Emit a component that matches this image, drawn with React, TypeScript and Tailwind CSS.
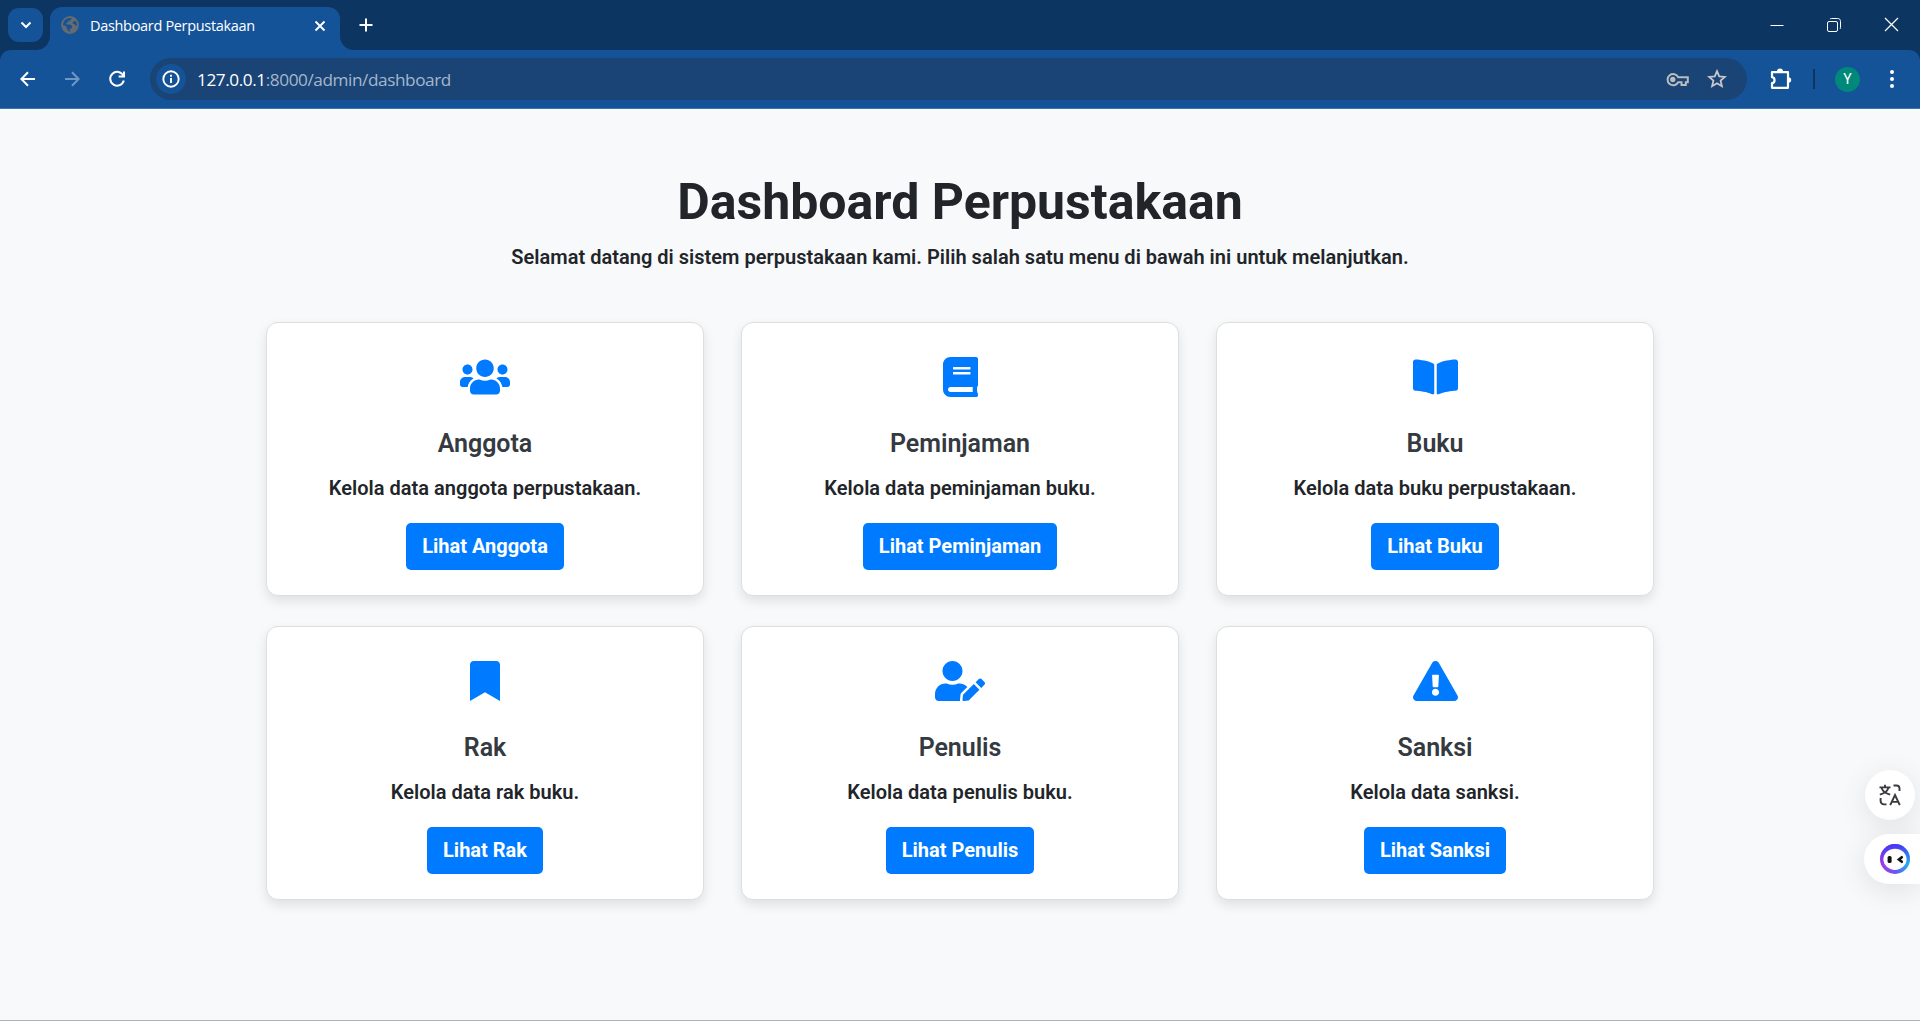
import type { ComponentType, ReactNode } from "react";
import {
  FaBook,
  FaBookmark,
  FaBookOpen,
  FaExclamationTriangle,
  FaUserEdit,
  FaUsers,
} from "react-icons/fa";

type Menu = {
  title: string;
  text: string;
  action: string;
  icon: ComponentType<{ className?: string }>;
  iconClass: string;
};

const menus: Menu[] = [
  { title: "Anggota", text: "Kelola data anggota perpustakaan.", action: "Lihat Anggota", icon: FaUsers, iconClass: "w-[50px]" },
  { title: "Peminjaman", text: "Kelola data peminjaman buku.", action: "Lihat Peminjaman", icon: FaBook, iconClass: "w-[35px]" },
  { title: "Buku", text: "Kelola data buku perpustakaan.", action: "Lihat Buku", icon: FaBookOpen, iconClass: "w-[45px]" },
  { title: "Rak", text: "Kelola data rak buku.", action: "Lihat Rak", icon: FaBookmark, iconClass: "w-[30px]" },
  { title: "Penulis", text: "Kelola data penulis buku.", action: "Lihat Penulis", icon: FaUserEdit, iconClass: "w-[50px]" },
  { title: "Sanksi", text: "Kelola data sanksi.", action: "Lihat Sanksi", icon: FaExclamationTriangle, iconClass: "w-[45px]" },
];

function Stroke({ size, width = 2, className = "", children }: { size: number; width?: number; className?: string; children: ReactNode }) {
  return (
    <svg
      width={size}
      height={size}
      viewBox={`0 0 ${size} ${size}`}
      fill="none"
      stroke="currentColor"
      strokeWidth={width}
      className={`block shrink-0 ${className}`}
    >
      {children}
    </svg>
  );
}

function TabStrip() {
  return (
    <div className="flex h-[50px] items-start bg-[#0c3661] text-white">
      <button className="ml-2 mt-2 flex h-[34px] w-[35px] items-center justify-center rounded-[11px] bg-[#155399]">
        <Stroke size={12}>
          <path d="M1.5 3.5 L6 8 L10.5 3.5" />
        </Stroke>
      </button>
      <div className="relative ml-[7px] mt-[7px] flex h-[43px] w-[290px] items-center rounded-t-[12px] bg-[#155399] pb-3 pl-[11px] pr-[14px] pt-1">
        <svg viewBox="0 0 18 18" className="absolute left-[11px] top-[9px] block size-[18px]">
          <circle cx="9" cy="9" r="8" fill="none" stroke="#666b70" strokeWidth="1.8" />
          <path d="M10.8 1.2 C10.8 3.6 10 4.6 7.6 4.8 C7.6 6.6 6.4 6.6 5.2 6.9 C5.2 8.4 5.6 8.6 7 8.6 C9.4 8.6 11.2 9 11.2 11 C11.2 12.2 10 12.4 8.8 12.6 V16.8 A8 8 0 0 0 16.8 9.6 C14.8 10 13.6 9.2 13.6 8 C12 8 11.2 7.4 12 6 C12.6 5 14.4 5.6 15.4 4.2 C14.4 2.6 12.6 1.4 10.8 1.2 Z M1.2 8.4 C3.6 9.2 6 10.4 6 12 C6 13.6 6.8 14.4 8 15 V17 C4 16.6 1 13 1.2 8.4 Z" fill="#666b70" />
        </svg>
        <span className="ml-[29px] mt-[3px] whitespace-nowrap font-['Open_Sans',sans-serif] text-[14.5px] leading-5 tracking-[-0.32px]">
          Dashboard Perpustakaan
        </span>
        <Stroke size={12} width={1.9} className="ml-auto mt-[2px]">
          <path d="M1.5 1.5 L10.5 10.5 M10.5 1.5 L1.5 10.5" />
        </Stroke>
        <svg viewBox="0 0 14 14" className="absolute -left-[14px] bottom-0 size-[14px]">
          <path d="M14 0 V14 H0 A14 14 0 0 0 14 0 Z" fill="#155399" />
        </svg>
        <svg viewBox="0 0 14 14" className="absolute -right-[14px] bottom-0 size-[14px]">
          <path d="M0 0 V14 H14 A14 14 0 0 1 0 0 Z" fill="#155399" />
        </svg>
      </div>
      <Stroke size={14} width={2} className="ml-[18.5px] mt-[18px]">
        <path d="M7 0.5 V13.5 M0.5 7 H13.5" />
      </Stroke>
      <div className="ml-auto mr-[21px] mt-[17px] flex items-center gap-[43px]">
        <Stroke size={14} width={1}>
          <path d="M0.5 7.5 H13.5" />
        </Stroke>
        <Stroke size={14} width={1}>
          <rect x="0.5" y="3.5" width="10" height="10" rx="1.5" />
          <path d="M3 1.2 C3.3 .7 3.7 .5 4.5 .5 H10.5 C12.5 .5 13.5 1.5 13.5 3.5 V9.5 C13.5 10.3 13.3 10.8 12.8 11" />
        </Stroke>
        <Stroke size={15} width={1.2}>
          <path d="M1 1 L14 14 M14 1 L1 14" />
        </Stroke>
      </div>
    </div>
  );
}

function Toolbar() {
  return (
    <div className="bg-[#0c3661]">
      <div className="flex h-[59px] items-center rounded-t-[11px] border-b border-[#3f74ad] bg-[#155399] text-white">
        <Stroke size={16} width={2} className="ml-5">
          <path d="M15 8 H2 M8 1.2 L1.4 8 L8 14.8" />
        </Stroke>
        <Stroke size={16} width={2} className="ml-7 text-[#6f97c4]">
          <path d="M1 8 H14 M8 1.2 L14.6 8 L8 14.8" />
        </Stroke>
        <Stroke size={18} width={2} className="ml-7">
          <path d="M15.3 5.6 A6.9 6.9 0 1 0 15.8 10.5" />
          <path d="M16 1.5 V6.6 H10.6" />
        </Stroke>
        <div className="ml-6 flex h-[42px] w-[1597px] items-center rounded-full bg-[#194475] pl-[6px] pr-5">
          <div className="flex size-[30px] items-center justify-center rounded-full bg-[#155399]">
            <Stroke size={18} width={1.9}>
              <circle cx="9" cy="9" r="7.7" />
              <path d="M9 8 V13 M9 4.8 V6.7" />
            </Stroke>
          </div>
          <span className="ml-[11px] mt-px whitespace-nowrap font-['Open_Sans',sans-serif] text-[17.2px] leading-6 tracking-[-0.42px] text-[#a5b7cc]">
            <span className="text-white">127.0.0.1</span>:8000/admin/dashboard
          </span>
          <Stroke size={23} width={2} className="ml-auto text-[#b9bcc1]">
            <path d="M12.2 9.2 A5.6 5.6 0 1 0 12.2 14.2 H15.5 V17 H19.8 V14.2 H21.8 V9.2 Z" />
            <circle cx="6.8" cy="11.5" r="1.7" fill="currentColor" />
          </Stroke>
          <Stroke size={20} width={1.8} className="ml-[18px] text-[#c6c8cb]">
            <path d="M10 2.2 L12.2 7.4 L17.9 7.9 L13.6 11.6 L14.9 17.2 L10 14.2 L5.1 17.2 L6.4 11.6 L2.1 7.9 L7.8 7.4 Z" />
          </Stroke>
        </div>
        <Stroke size={22} width={2.2} className="ml-[23px]">
          <path d="M2 4.2 H18 V19.8 H2 V15.2 C5.4 14.8 5.4 9.6 2 9.2 Z" strokeLinejoin="round" />
          <path d="M7 3.5 A3 3 0 0 1 13 3.5 Z M18.5 9.2 A2.7 2.7 0 0 1 18.5 14.6 Z" fill="currentColor" stroke="none" />
        </Stroke>
        <div className="ml-[21px] h-5 w-[2px] bg-[#0c3661]" />
        <div className="ml-5 flex size-[25px] items-center justify-center rounded-full bg-[#00897b] font-['Roboto',sans-serif] text-[14px] leading-none">
          Y
        </div>
        <svg viewBox="0 0 4 18" className="ml-[30px] block h-[18px] w-1" fill="currentColor">
          <circle cx="2" cy="2" r="2" />
          <circle cx="2" cy="9" r="2" />
          <circle cx="2" cy="16" r="2" />
        </svg>
      </div>
    </div>
  );
}

function MenuCard({ title, text, action, icon: Icon, iconClass }: Menu) {
  return (
    <div className="flex h-[274px] flex-col items-center rounded-[12px] border border-[#dddedf] bg-white pt-[34px] shadow-[0_5px_12px_rgba(0,0,0,0.1)]">
      <Icon className={`block h-10 text-[#007bff] ${iconClass}`} />
      <h5 className="mt-[32px] text-[25px] font-semibold leading-[30px] tracking-[-0.05px] text-[#343a40]">{title}</h5>
      <p className="mt-[14px] text-xl font-semibold leading-[30px] tracking-[0.02px]">{text}</p>
      <a className="mt-[20px] flex h-[47px] items-center rounded-[5px] bg-[#007bff] px-4 pb-[2px] text-xl font-bold text-white">
        {action}
      </a>
    </div>
  );
}

function TranslateIcon() {
  return (
    <svg viewBox="0 0 22 22" className="block size-[22px]" fill="none" stroke="#3a3a40" strokeWidth="1.9">
      <path d="M0.5 3.4 H11.5 M6 0.8 V3.4 M2.6 4 C3.8 7.5 7 9.6 11.2 10.6 M9.4 4 C8.2 7.5 5 9.6 0.8 10.6" />
      <path d="M14.5 1.5 H17.5 A3 3 0 0 1 20.5 4.5 V7 M1.6 14 V17 A3.4 3.4 0 0 0 5 20.4 H7.5" />
      <path d="M11.2 21.2 L16 11 L20.8 21.2 M13 17.9 H19" />
    </svg>
  );
}

function AssistantIcon() {
  return (
    <svg viewBox="0 0 30 30" className="block size-[30px]">
      <defs>
        <linearGradient id="ring" x1="0.1" y1="0.75" x2="0.95" y2="0.6">
          <stop offset="0" stopColor="#a43be6" />
          <stop offset="0.5" stopColor="#5a5df5" />
          <stop offset="1" stopColor="#22b8ee" />
        </linearGradient>
        <linearGradient id="ringTop" x1="0" y1="0" x2="0" y2="1">
          <stop offset="0" stopColor="#4a35f5" />
          <stop offset="0.7" stopColor="#4a35f5" stopOpacity="0" />
        </linearGradient>
      </defs>
      <circle cx="15" cy="15" r="15" fill="url(#ring)" />
      <circle cx="15" cy="15" r="15" fill="url(#ringTop)" />
      <ellipse cx="15" cy="15.3" rx="11.6" ry="10.6" fill="white" />
      <rect x="7.6" y="12" width="4" height="7" rx="1.6" fill="#111" />
      <path d="M21.8 13.2 L18.9 15.5 L21.8 17.8" fill="none" stroke="#111" strokeWidth="2.6" strokeLinecap="round" />
    </svg>
  );
}

export default function App() {
  return (
    <div className="relative flex h-[1021px] w-[1920px] flex-col overflow-hidden bg-[#f8f9fa] font-['Roboto',sans-serif] text-[#212529]">
      <TabStrip />
      <Toolbar />
      <main className="flex grow flex-col items-center border-b border-[#b0b1b3] bg-[#f8f9fb]">
        <h1 className="mt-[63px] text-[50px] font-bold leading-[61px]">Dashboard Perpustakaan</h1>
        <p className="mt-[9px] text-xl font-semibold leading-[30px] tracking-[0.02px]">
          Selamat datang di sistem perpustakaan kami. Pilih salah satu menu di bawah ini untuk melanjutkan.
        </p>
        <div className="mt-[50px] grid w-[1388px] grid-cols-3 gap-x-[37px] gap-y-[30px]">
          {menus.map((menu) => (
            <MenuCard key={menu.title} {...menu} />
          ))}
        </div>
      </main>
      <button className="absolute left-[1865px] top-[770px] flex size-[50px] items-center justify-center rounded-full bg-white shadow-[0_6px_30px_rgba(0,0,0,0.1)]">
        <TranslateIcon />
      </button>
      <button className="absolute left-[1864px] top-[834px] flex h-[50px] w-[56px] items-center rounded-l-full bg-white pl-4 shadow-[0_6px_30px_rgba(0,0,0,0.1)]">
        <AssistantIcon />
      </button>
    </div>
  );
}
